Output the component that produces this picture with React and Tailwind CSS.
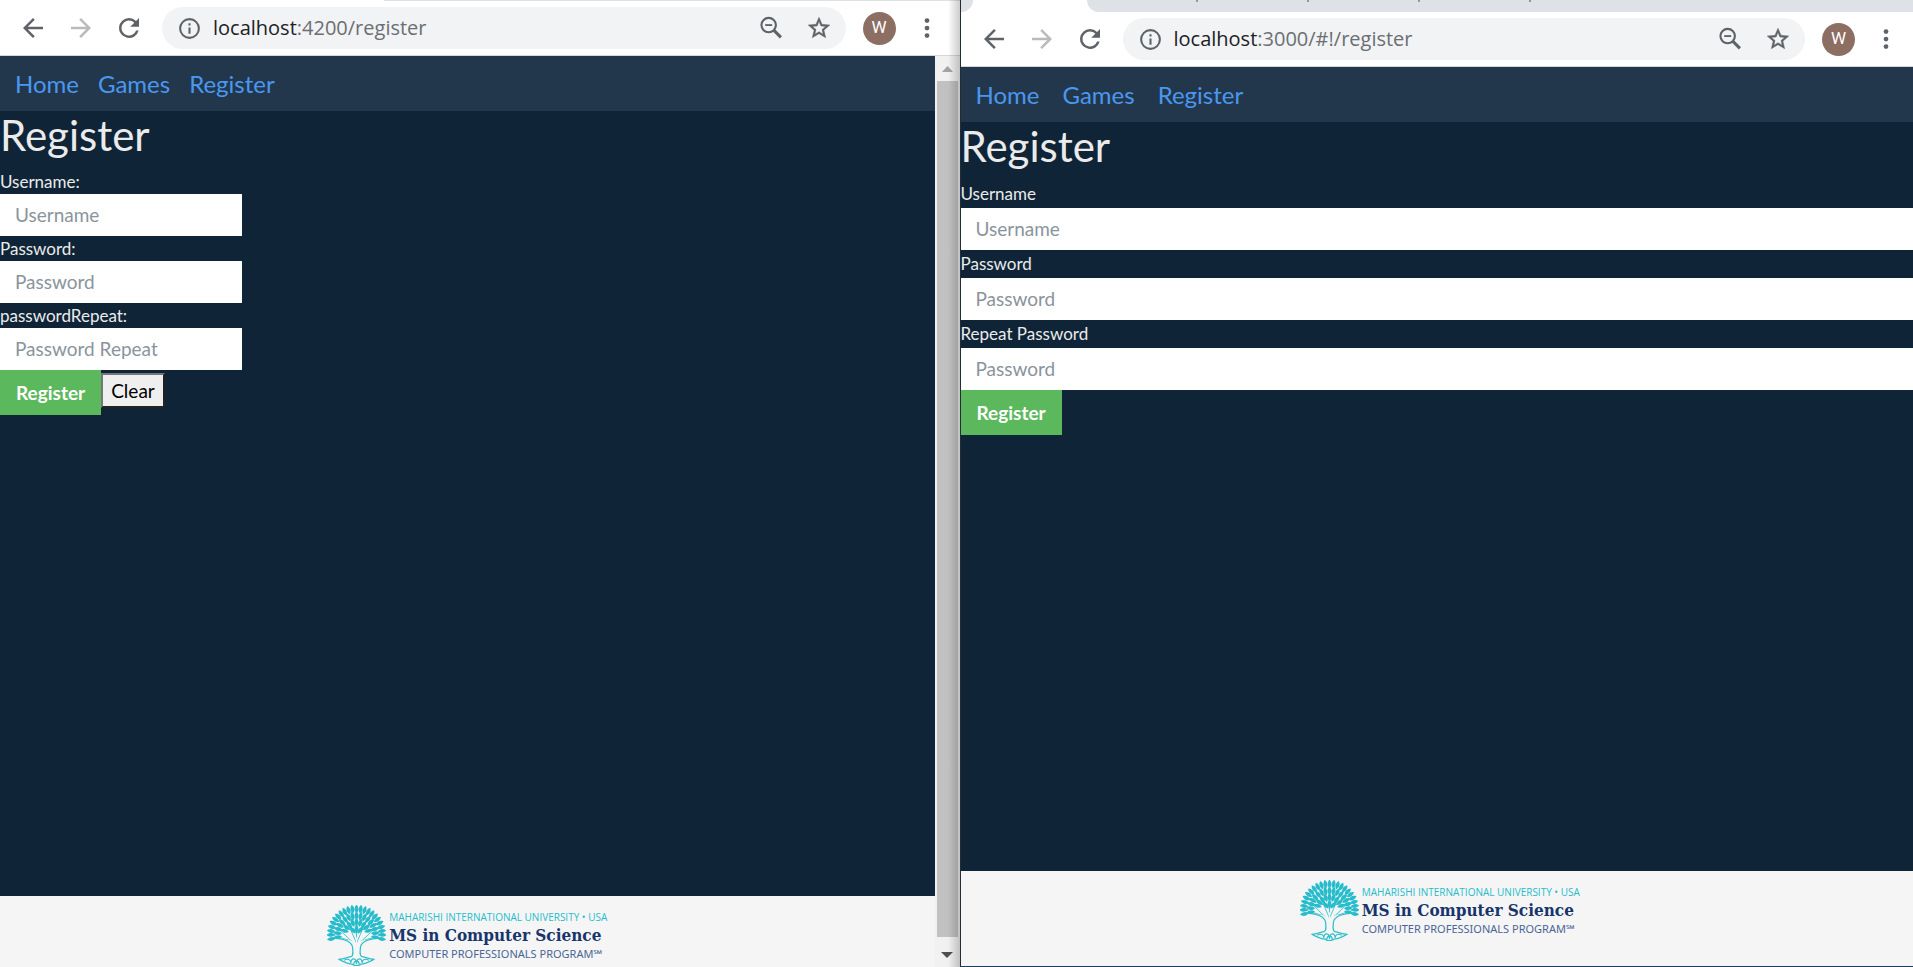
import React from "react";

const FONT_LATO = "font-['Lato',sans-serif]";

function BackIcon() {
  return (
    <svg viewBox="0 0 24 24" className="size-[30px]" fill="currentColor" aria-hidden="true">
      <path d="M20 11H7.83l5.59-5.59L12 4l-8 8 8 8 1.41-1.41L7.83 13H20v-2z" />
    </svg>
  );
}

function ForwardIcon() {
  return (
    <svg viewBox="0 0 24 24" className="size-[30px]" fill="currentColor" aria-hidden="true">
      <path d="M12 4l-1.410 1.410L16.170 11H4v2h12.170l-5.580 5.590L12 20l8-8z" />
    </svg>
  );
}

function ReloadIcon() {
  return (
    <svg viewBox="0 0 24 24" className="size-[30px]" fill="currentColor" aria-hidden="true">
      <path d="M17.65 6.35A7.958 7.958 0 0 0 12 4a8 8 0 1 0 7.73 10h-2.080A6 6 0 1 1 12 6c1.660 0 3.140.690 4.220 1.780L13 11h7V4l-2.350 2.350z" />
    </svg>
  );
}

function InfoIcon() {
  return (
    <svg viewBox="0 0 24 24" className="size-[25px] shrink-0 text-[#5f6368]" fill="currentColor" aria-hidden="true">
      <path d="M11 7h2v2h-2V7zm0 4h2v6h-2v-6zm1-9a10 10 0 1 0 0 20 10 10 0 0 0 0-20zm0 18a8 8 0 1 1 0-16 8 8 0 0 1 0 16z" />
    </svg>
  );
}

function ZoomOutIcon() {
  return (
    <svg viewBox="0 0 24 24" className="size-[28px]" fill="none" stroke="currentColor" aria-hidden="true">
      <circle cx="10" cy="9.500" r="6.200" strokeWidth="1.800" />
      <path d="M7 9.500h6" strokeWidth="1.600" />
      <path d="M14.300 13.800L20.500 20" strokeWidth="2.600" />
    </svg>
  );
}

function StarIcon() {
  return (
    <svg viewBox="0 0 24 24" className="size-[26px]" fill="currentColor" stroke="currentColor" strokeWidth="0.4" aria-hidden="true">
      <path d="M22 9.240l-7.190-.620L12 2 9.190 8.630 2 9.240l5.460 4.730L5.820 21 12 17.270 18.180 21l-1.630-7.030L22 9.240zM12 15.400l-3.760 2.270 1-4.280-3.320-2.880 4.380-.380L12 6.100l1.710 4.040 4.380.380-3.320 2.880 1 4.280L12 15.400z" />
    </svg>
  );
}

function MenuIcon() {
  return (
    <svg viewBox="0 0 24 24" className="size-[30px]" fill="currentColor" aria-hidden="true">
      <circle cx="12" cy="6" r="1.9" />
      <circle cx="12" cy="12" r="1.9" />
      <circle cx="12" cy="18" r="1.9" />
    </svg>
  );
}

function Toolbar({ host, path, className }) {
  return (
    <div className={`flex h-[55px] shrink-0 items-center border-b border-[#d5d8db] bg-white pl-[18px] text-[#5f6368] ${className}`}>
      <div className="flex gap-[18px]">
        <button type="button" aria-label="Back"><BackIcon /></button>
        <button type="button" aria-label="Forward" className="text-[#bababc]"><ForwardIcon /></button>
        <button type="button" aria-label="Reload"><ReloadIcon /></button>
      </div>
      <div className="ml-[18px] flex h-[42px] min-w-0 flex-1 items-center rounded-full bg-[#f1f3f4] pl-[15px] pr-[14px]">
        <InfoIcon />
        <div className="ml-[11px] min-w-0 flex-1 truncate font-['Open_Sans',sans-serif] text-[20px] leading-7 text-[#6b6f73]">
          <span className="text-[#202124]">{host}</span>{path}
        </div>
        <button type="button" aria-label="Zoom" className="mr-[21px]"><ZoomOutIcon /></button>
        <button type="button" aria-label="Bookmark this page"><StarIcon /></button>
      </div>
      <button type="button" className="ml-[17px] size-[33px] rounded-full bg-[#8d6e63] font-['Roboto',sans-serif] text-[17px] text-white">W</button>
      <button type="button" aria-label="Menu" className="ml-4"><MenuIcon /></button>
    </div>
  );
}

function SiteNav({ gap }) {
  return (
    <nav className={`flex h-[55px] shrink-0 items-center bg-[#22374b] px-[15px] text-[24px] leading-8 text-[#4a97f0] ${gap}`}>
      <a href="#home">Home</a>
      <a href="#games">Games</a>
      <a href="#register">Register</a>
    </nav>
  );
}

function Field({ id, label, placeholder, type, labelClass, inputClass }) {
  return (
    <div>
      <label htmlFor={id} className={`block text-[17px] ${labelClass}`}>{label}</label>
      <input
        id={id}
        type={type}
        placeholder={placeholder}
        className={`block h-[42px] bg-white px-[15px] pb-[2px] text-[19px] leading-7 text-[#333] placeholder:text-[#8a949d] ${inputClass}`}
      />
    </div>
  );
}

const RINGS = [
  { radius: 27, count: 23, spread: 100 },
  { radius: 20, count: 17, spread: 98 },
  { radius: 13, count: 9, spread: 72 },
  { radius: 6, count: 3, spread: 40 },
];

const LEAVES = RINGS.flatMap(({ radius, count, spread }) =>
  Array.from({ length: count }, (_, i) => {
    const angle = -spread + (2 * spread * i) / (count - 1);
    const rad = (angle * Math.PI) / 180;
    return { x: 31 + radius * Math.sin(rad), y: 31 - radius * Math.cos(rad), angle };
  })
);

function TreeLogo() {
  return (
    <svg viewBox="0 0 62 64" className="h-[61px] w-[59px] shrink-0" aria-hidden="true">
      <g fill="none" stroke="#2dbfcb" strokeWidth="0.9">
        <path d="M31 44V14M31 40L20 15M31 40L42 15M29 41L11 24M33 41L51 24M26 38L7 32M36 38L55 32" />
      </g>
      <g fill="#27bccb">
        {LEAVES.map(({ x, y, angle }) => (
          <path
            key={`${x}-${y}`}
            d="M0-4.600C2.800-1.500 2.600 2 0 4.600-2.600 2-2.800-1.500 0-4.600z"
            transform={`translate(${x.toFixed(1)} ${y.toFixed(1)}) rotate(${angle.toFixed(0)})`}
          />
        ))}
      </g>
      <path d="M13 36C23 38 27 41 27 46C28 52 27 55 23 57L39 57C35 55 34 52 35 46C35 41 39 38 49 36L37 37L31 42L25 37z" fill="#f5f5f5" />
      <path d="M11 35C23 37 27 40 27 46C28 52 27 55 23 57M51 35C39 37 35 40 35 46C34 52 35 55 39 57" fill="none" stroke="#2dbfcb" strokeWidth="1.300" />
      <path d="M31 45L23 29M31 45L39 29M31 43V34" fill="none" stroke="#f5f5f5" strokeWidth="1.500" />
      <path d="M26 54C21 55 18 57 12 57C17 59 21 62 26 62C29 64 33 64 36 62C41 62 45 59 50 57C44 57 41 55 36 54" fill="#f5f5f5" stroke="#2dbfcb" strokeWidth="1.300" />
      <path d="M18 58C22 56 25 57 25 61M25 61C25 55 31 55 31 62C31 55 37 55 37 61M37 61C37 57 40 56 44 58M28 62C29 58 33 58 34 62" fill="none" stroke="#2dbfcb" strokeWidth="1.200" />
    </svg>
  );
}

function SiteFooter({ className }) {
  return (
    <footer className={`flex shrink-0 justify-center bg-[#f5f5f5] pt-[9px] ${className}`}>
      <div className="flex gap-[3px]">
        <TreeLogo />
        <div className="whitespace-nowrap pt-1 font-['Open_Sans',sans-serif]">
          <p className="text-[10px] font-medium leading-4 text-[#27bccb]">MAHARISHI INTERNATIONAL UNIVERSITY • USA</p>
          <p className="font-['DejaVu_Serif_Condensed','DejaVu_Serif',serif] text-[17px] font-bold leading-5 text-[#17356b]">MS in Computer Science</p>
          <p className="font-['Noto_Sans',sans-serif] text-[11px] leading-[18px] text-[#4a6595]">COMPUTER PROFESSIONALS PROGRAM℠</p>
        </div>
      </div>
    </footer>
  );
}

function Submit() {
  return (
    <button type="submit" className="h-[45px] bg-[#5cb85c] px-4 text-[19px] font-bold leading-7 text-white">Register</button>
  );
}

function Scrollbar() {
  return (
    <div className="flex w-[25px] shrink-0 flex-col items-center bg-[#f1f1f1]" aria-hidden="true">
      <svg viewBox="0 0 25 25" className="size-[25px] shrink-0"><path d="M7 16L12.500 10L18 16z" fill="#a3a3a3" /></svg>
      <div className="w-[21px] flex-1 bg-[#c1c1c1]" />
      <svg viewBox="0 0 25 30" className="h-[30px] w-[25px] shrink-0"><path d="M6 15L12 21L18 15z" fill="#505050" /></svg>
    </div>
  );
}

function AngularWindow() {
  return (
    <section className="relative flex h-full min-w-0 flex-[960] flex-col bg-white">
      <div className="flex h-px shrink-0 justify-end bg-white">
        <div className="w-3/5 bg-[#dee1e6]" />
      </div>
      <Toolbar host="localhost" path=":4200/register" className="pr-[18px]" />
      <div className="flex min-h-0 flex-1">
        <div className="flex min-w-0 flex-1 flex-col bg-[#0f2537]">
          <SiteNav gap="gap-[19px]" />
          <main className="flex-1">
            <h1 className="mb-[10px] text-[42px] leading-[48px]">Register</h1>
            <form>
              <Field id="ng-user" label="Username:" placeholder="Username" type="text" labelClass="leading-[25px]" inputClass="w-[242px]" />
              <Field id="ng-pass" label="Password:" placeholder="Password" type="password" labelClass="leading-[25px]" inputClass="w-[242px]" />
              <Field id="ng-repeat" label="passwordRepeat:" placeholder="Password Repeat" type="password" labelClass="leading-[25px]" inputClass="w-[242px]" />
              <div className="flex items-start">
                <Submit />
                <button type="reset" className="mt-[3px] h-[35px] border-2 border-t-[#767676] border-l-[#767676] border-r-[#222] border-b-[#222] bg-[#efefef] px-2 text-[19px] leading-7 text-black">Clear</button>
              </div>
            </form>
          </main>
          <SiteFooter className="h-[71px]" />
        </div>
        <Scrollbar />
      </div>
      <div className="pointer-events-none absolute inset-y-0 right-0 w-3 bg-linear-to-r from-transparent to-black/20" />
    </section>
  );
}

function TabStrip() {
  return (
    <div className="flex h-3 shrink-0 bg-white">
      <div className="w-3 rounded-br-[12px] bg-[#dee1e6]" />
      <div className="w-[114px]" />
      <div className="flex flex-1 rounded-bl-[12px] bg-[#dee1e6]">
        {[1, 2, 3, 4].map((tab) => (
          <div key={tab} className="flex w-[111px] justify-end">
            <div className="h-[2px] w-[2px] bg-[#93969a]" />
          </div>
        ))}
      </div>
    </div>
  );
}

function NodeWindow() {
  return (
    <section className="flex h-full min-w-0 flex-[953] flex-col border-b border-l border-b-[#1a4055] border-l-[#222c35] bg-[#0f2537]">
      <TabStrip />
      <Toolbar host="localhost" path=":3000/#!/register" className="pr-3" />
      <SiteNav gap="gap-[23px]" />
      <main className="flex-1">
        <h1 className="mb-[10px] text-[42px] leading-[48px]">Register</h1>
        <form>
          <Field id="node-user" label="Username" placeholder="Username" type="text" labelClass="leading-7" inputClass="w-full" />
          <Field id="node-pass" label="Password" placeholder="Password" type="password" labelClass="leading-7" inputClass="w-full" />
          <Field id="node-repeat" label="Repeat Password" placeholder="Password" type="password" labelClass="leading-7" inputClass="w-full" />
          <Submit />
        </form>
      </main>
      <SiteFooter className="h-[95px] pl-[6px]" />
    </section>
  );
}

export default function App() {
  return (
    <div className={`flex h-screen overflow-hidden text-[#ebebeb] ${FONT_LATO}`}>
      <AngularWindow />
      <NodeWindow />
    </div>
  );
}
